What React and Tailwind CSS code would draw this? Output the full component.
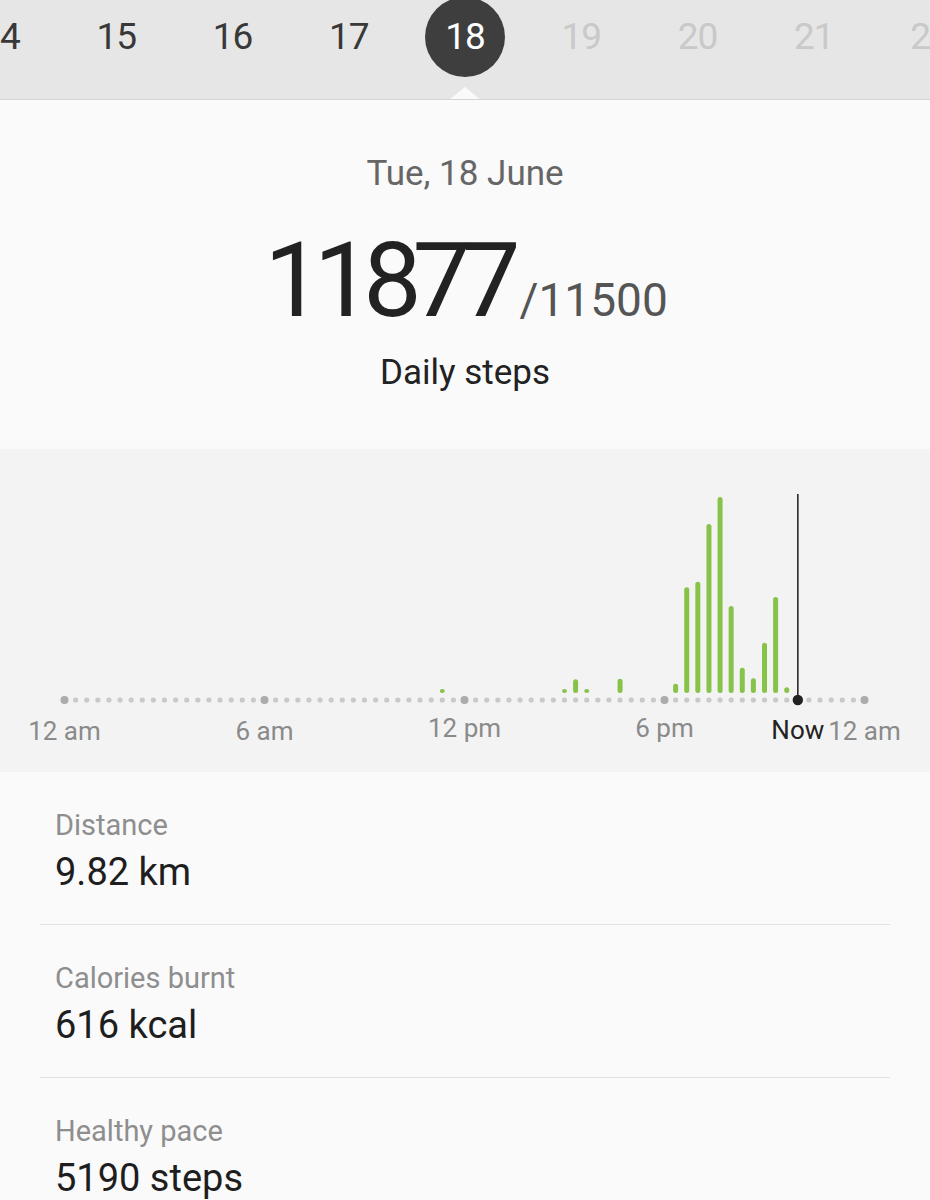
import React from "react";

const days = [
  { d: "14", s: "past" },
  { d: "15", s: "past" },
  { d: "16", s: "past" },
  { d: "17", s: "past" },
  { d: "18", s: "cur" },
  { d: "19", s: "fut" },
  { d: "20", s: "fut" },
  { d: "21", s: "fut" },
  { d: "22", s: "fut" },
];

const bars = [
  [34, 689], [45, 689], [46, 679.3], [47, 689], [50, 678.7], [55, 683.7],
  [56, 587.3], [57, 581.7], [58, 524], [59, 497], [60, 606], [61, 667.7],
  [62, 678.3], [63, 642.7], [64, 597], [65, 687.3],
];

const X0 = 64.5;
const STEP = 200 / 18;
const OFF = 449;

function Chart() {
  const dots = [];
  for (let i = 0; i <= 72; i++) {
    if (i === 66) continue;
    const big = i % 18 === 0;
    dots.push(
      <circle key={i} cx={X0 + i * STEP} cy={251} r={big ? 4 : 2.6} fill={big ? "#ababab" : "#c9c9c9"} />
    );
  }
  const nowX = X0 + 66 * STEP;
  const labels = [
    { t: "12 am", x: X0, y: 291 },
    { t: "6 am", x: X0 + 200, y: 291 },
    { t: "12 pm", x: X0 + 400, y: 288 },
    { t: "6 pm", x: X0 + 600, y: 288 },
    { t: "12 am", x: X0 + 800, y: 291 },
  ];
  return (
    <svg width="930" height="323" viewBox="0 0 930 323" className="block">
      {bars.map(([i, top]) => {
        const x = X0 + i * STEP - 2.5;
        const y = top - OFF;
        const h = 693 - OFF - y;
        return <rect key={i} x={x} y={y} width={5} height={Math.max(h, 4)} rx={2.5} fill="#87c249" />;
      })}
      {dots}
      <line x1={nowX} y1={494 - OFF} x2={nowX} y2={251} stroke="#2a2a2a" strokeWidth="1.6" />
      <circle cx={nowX} cy={251} r={5.2} fill="#222" />
      {labels.map((l, k) => (
        <text key={k} x={l.x} y={l.y} textAnchor="middle" fontFamily="Roboto, sans-serif" fontSize="26" fill="#8a8a8a">
          {l.t}
        </text>
      ))}
      <text x={nowX} y={290} textAnchor="middle" fontFamily="Roboto, sans-serif" fontSize="26" fill="#222">
        Now
      </text>
    </svg>
  );
}

function Stat({ label, value, last }) {
  return (
    <div className={"pl-[15px] pt-[37px] pb-[30px] " + (last ? "" : "border-b border-[#e2e2e2]")}>
      <div className="text-[29px] leading-[32px] text-[#8e8e8e]">{label}</div>
      <div className="mt-[9px] text-[38px] leading-[44px] text-[#1e1e1e]">{value}</div>
    </div>
  );
}

export default function App() {
  return (
    <div className="w-[930px] min-h-[1200px] bg-[#fafafa] font-['Roboto',sans-serif]">
      <div className="relative h-[100px] bg-[#e6e6e6] border-b border-[#d5d5d5] overflow-hidden">
        <div className="flex justify-center h-[74px] items-center">
          {days.map((x) => (
            <div key={x.d} className="w-[116.25px] shrink-0 flex justify-center items-center">
              {x.s === "cur" ? (
                <div className="w-[80px] h-[80px] rounded-full bg-[#3e3e3e] flex items-center justify-center text-white text-[37px] leading-[38px] tracking-[-1px]">
                  {x.d}
                </div>
              ) : (
                <div className={"text-[37px] leading-[38px] tracking-[-1px] " + (x.s === "past" ? "text-[#383838]" : "text-[#c9c9c9]")}>
                  {x.d}
                </div>
              )}
            </div>
          ))}
        </div>
        <div className="absolute left-1/2 -translate-x-1/2 bottom-[-1px] w-0 h-0 border-l-[16px] border-r-[16px] border-l-transparent border-r-transparent border-b-[13px] border-b-[#fafafa]" />
      </div>

      <div className="flex flex-col items-center pt-[54px] h-[349px]">
        <div className="text-[35px] leading-[40px] text-[#666]">Tue, 18 June</div>
        <div className="mt-[35px] flex items-baseline pl-[2px]">
          <span className="text-[104px] leading-[104px] tracking-[-9px] text-[#222]">11877</span>
          <span className="ml-[8px] text-[46px] leading-[46px] text-[#555]">/11500</span>
        </div>
        <div className="mt-[20px] text-[35px] leading-[40px] text-[#222]">Daily steps</div>
      </div>

      <div className="bg-[#f3f3f3] h-[323px]">
        <Chart />
      </div>

      <div className="px-[40px]">
        <Stat label="Distance" value="9.82 km" />
        <Stat label="Calories burnt" value="616 kcal" />
        <Stat label="Healthy pace" value="5190 steps" last />
      </div>
    </div>
  );
}
